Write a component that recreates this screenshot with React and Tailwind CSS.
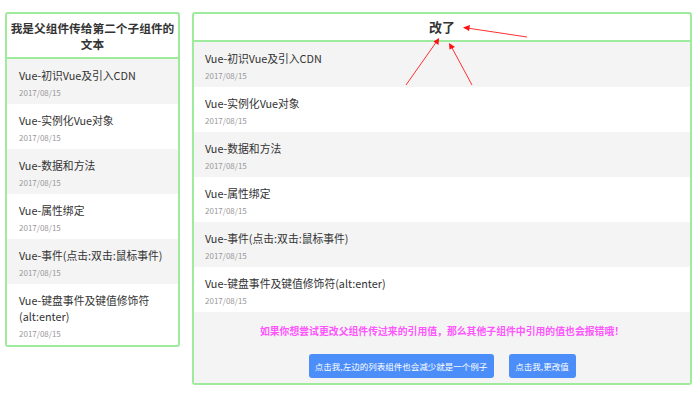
import React from "react";

const items = [
  "Vue-初识Vue及引入CDN",
  "Vue-实例化Vue对象",
  "Vue-数据和方法",
  "Vue-属性绑定",
  "Vue-事件(点击:双击:鼠标事件)",
  "Vue-键盘事件及键值修饰符(alt:enter)",
];

const font = { fontFamily: '"Noto Sans CJK SC", "Noto Sans", sans-serif' };

function Item({ title, i, pl }) {
  return (
    <div className={`${i % 2 === 0 ? "bg-[#f4f4f4]" : "bg-white"} ${pl} pr-[8px] pt-[8px] pb-[5px]`}>
      <div className="text-[10.8px] leading-[16px] text-[#333]">{title}</div>
      <div className="mt-[4px] text-[8px] leading-[12px] text-[#999]">2017/08/15</div>
    </div>
  );
}

export default function App() {
  return (
    <div className="relative w-[698px] h-[397px] bg-white overflow-hidden" style={font}>
      <div className="flex items-start gap-[12px] pt-[12px] pl-[5px]">
        <div className="w-[175px] border-2 border-[#9eeb9e] rounded-[3px] overflow-hidden">
          <div className="border-b-2 border-[#9eeb9e] pt-[6px] pb-[5px] px-[2px] text-center text-[11.7px] leading-[16px] font-bold text-[#333]">
            我是父组件传给第二个子组件的文本
          </div>
          {items.map((t, i) => (
            <Item key={i} title={t} i={i} pl="pl-[12px]" />
          ))}
        </div>
        <div className="w-[500px] border-2 border-[#9eeb9e] rounded-[3px] overflow-hidden">
          <div className="h-[28px] border-b-2 border-[#9eeb9e] flex items-center justify-center text-[13px] font-bold text-[#333]">
            改了
          </div>
          {items.map((t, i) => (
            <Item key={i} title={t} i={i} pl="pl-[11px]" />
          ))}
          <div className="bg-[#f4f4f4] pt-[13px] pb-[5px] flex flex-col items-center">
            <div className="text-[9.85px] leading-[12px] font-bold text-[#f5f]">
              如果你想尝试更改父组件传过来的引用值，那么其他子组件中引用的值也会报错哦！
            </div>
            <div className="mt-[17px] flex gap-[15px]">
              <button className="w-[185px] h-[24px] rounded-[3px] bg-[#4b8ef9] text-white text-[8.5px] flex items-center justify-center">
                点击我,左边的列表组件也会减少就是一个例子
              </button>
              <button className="w-[67px] h-[24px] rounded-[3px] bg-[#4b8ef9] text-white text-[8.5px] flex items-center justify-center">
                点击我,更改值
              </button>
            </div>
          </div>
        </div>
      </div>
      <svg className="absolute left-0 top-0 pointer-events-none" width="698" height="397">
        <g stroke="#ff3030" strokeWidth="1" fill="#ff2020">
          <line x1="406" y1="85" x2="437" y2="41" />
          <line x1="472" y1="85" x2="451" y2="46" />
          <line x1="527" y1="37" x2="467" y2="28" />
        </g>
        <g fill="#ff1010">
          <polygon points="439,38 438.5,45 433.5,41.5" />
          <polygon points="449,43 455,47 449.5,49.5" />
          <polygon points="463,27.5 470,25 469,31" />
        </g>
      </svg>
    </div>
  );
}
